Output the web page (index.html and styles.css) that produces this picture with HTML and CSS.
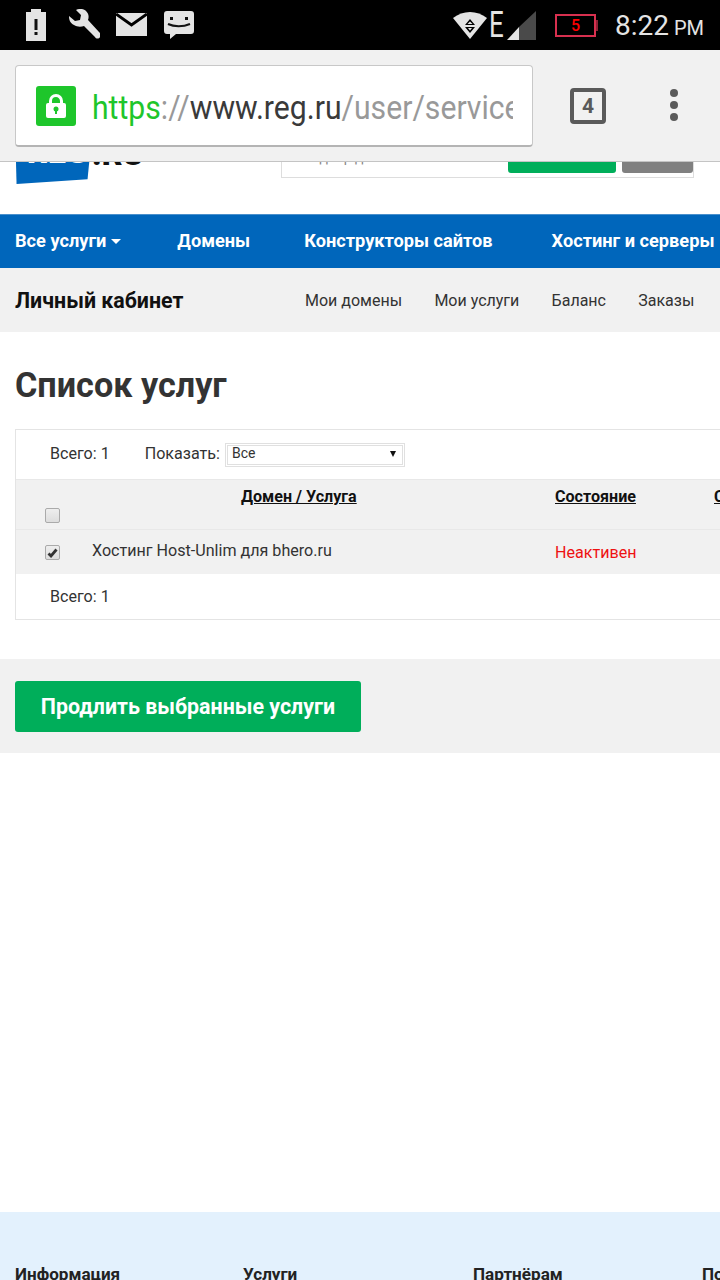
FILE: index.html
```html
<!DOCTYPE html>
<html lang="en">
<head>
  <meta charset="UTF-8" />
  <title>REG.RU – Список услуг</title>
  <link rel="stylesheet" href="styles.css">
</head>
<body>
  <div class="status-bar">
    <div class="status-left">
      <svg class="ic" width="20" height="32" viewBox="0 0 20 32"><path fill="#e4e4e4" d="M0 3h5V0h10v3h5v29H0z"/><path fill="#111" d="M8.500 10h3v11h-3zM8.500 23h3v3h-3z"/></svg>
      <svg class="ic wrench" width="32" height="32" viewBox="0 0 32 32"><path fill="#e4e4e4" d="M1 7 7 12l5-1 1-5-5-5c4-2 8-1 10 1 3 3 3 6 2 9l11 12c2 2 2 3 1 5s-4 2-5 0L16 17c-3 1-7 1-10-1-4-2-5-5-5-9z"/></svg>
      <svg class="ic" width="31" height="24" viewBox="0 0 31 24"><path fill="#e4e4e4" d="M0 0h31v23H0z"/><path fill="none" stroke="#000" stroke-width="3" d="M0 1l15.500 11L31 1"/></svg>
      <svg class="ic" width="30" height="28" viewBox="0 0 30 28"><path fill="#e4e4e4" d="M3 0h24q3 0 3 3v17q0 3-3 3H12l-6 5v-5H3q-3 0-3-3V3q0-3 3-3z"/><path fill="#111" d="M6 6h3v3H6zM21 6h3v3h-3z"/><path fill="none" stroke="#111" stroke-width="2" d="M4 13c6 3 15 3 22 0"/></svg>
    </div>
    <div class="status-right">
      <svg class="ic" width="34" height="28" viewBox="0 0 34 28"><path fill="#e4e4e4" d="M0 7C5 3 11 1 17 1s12 2 17 6L17 28z"/><path fill="#000" d="M17 8l5 6H12zM12 16h10l-5 6z"/><path fill="#e4e4e4" d="M17 10.500l2.500 2.500h-5zM15 17h4l-2 2.500z"/></svg>
      <span class="net">E</span>
      <svg class="ic" width="29" height="29" viewBox="0 0 29 29"><path fill="#4a4a4a" d="M29 0v29H12V16z"/><path fill="#e4e4e4" d="M12 16v13H0z"/></svg>
      <div class="battery"><span>5</span></div>
      <div class="clock">8:22 <small>PM</small></div>
    </div>
  </div>

  <div class="toolbar">
    <div class="url-box">
      <span class="lock">
        <svg width="20" height="24" viewBox="0 0 20 24"><path fill="none" stroke="#fff" stroke-width="3" d="M4.500 10V7a5.500 5.500 0 0 1 11 0v3"/><rect x="0" y="9" width="20" height="15" rx="2" fill="#fff"/><circle cx="10" cy="15" r="2.500" fill="#1ec62b"/><path fill="#1ec62b" d="M9 15h2v5H9z"/></svg>
      </span>
      <div class="url"><span class="url-text"><span class="g">https</span><span class="m">://</span><span class="d">www.reg.ru</span><span class="m">/user/service</span></span></div>
    </div>
    <div class="tabs">4</div>
    <div class="menu-dots"><i></i><i></i><i></i></div>
  </div>

  <header class="site-head">
    <div class="logo"><div class="logo-flag">REG</div><span class="logo-ru">.RU</span></div>
    <div class="search">
      <span class="search-text">Подбор домена</span>
      <span class="btn-find">Подобрать</span>
      <span class="btn-more">Ещё</span>
    </div>
  </header>

  <nav class="main-nav">
    <a class="all">Все услуги<i class="caret"></i></a>
    <a>Домены</a>
    <a>Конструкторы сайтов</a>
    <a>Хостинг и серверы</a>
  </nav>

  <div class="sub-nav">
    <strong>Личный кабинет</strong>
    <div class="sub-links">
      <a>Мои домены</a>
      <a>Мои услуги</a>
      <a>Баланс</a>
      <a>Заказы</a>
    </div>
  </div>

  <main>
    <h1>Список услуг</h1>
    <div class="panel">
      <div class="row top">
        <span class="total">Всего: 1</span>
        <span class="show">Показать:</span>
        <span class="fake-select">Все<i></i></span>
      </div>
      <div class="row head">
        <span class="box"></span>
        <a class="col-name">Домен / Услуга</a>
        <a class="col-state">Состояние</a>
        <a class="col-more">Срок</a>
      </div>
      <div class="row item">
        <span class="box checked">
          <svg width="11" height="10" viewBox="0 0 11 10"><path fill="none" stroke="#333" stroke-width="2.800" d="M1.500 5.500 4 8 9.500 1.500"/></svg>
        </span>
        <span class="item-name">Хостинг Host-Unlim для bhero.ru</span>
        <span class="col-state off">Неактивен</span>
      </div>
      <div class="row bottom"><span class="total">Всего: 1</span></div>
    </div>
    <div class="action-bar">
      <button class="renew">Продлить выбранные услуги</button>
    </div>
  </main>

  <footer>
    <b>Информация</b>
    <b>Услуги</b>
    <b>Партнёрам</b>
    <b>Поддержка</b>
  </footer>
</body>
</html>
```

FILE: styles.css
```css
html, body {
  margin: 0;
  height: 1280px;
  overflow: hidden;
}
body {
  width: 720px;
  font-family: Roboto, 'Liberation Sans', sans-serif;
  background: #fff;
  color: #333;
}
a {
  color: inherit;
}
.status-bar {
  height: 50px;
  background: #000;
  display: flex;
  justify-content: space-between;
  align-items: center;
}
.status-left {
  display: flex;
  align-items: center;
  gap: 17px;
  padding-left: 26px;
}
.status-left .wrench {
  margin: 0 -1px 0 5px;
}
.status-right {
  display: flex;
  align-items: center;
  padding-right: 16px;
}
.ic {
  display: block;
  flex: none;
}
.net {
  color: #e4e4e4;
  font-size: 36px;
  line-height: 30px;
  width: 14px;
  margin: 0 4px 0 2px;
  transform: scaleX(.72);
  transform-origin: left center;
}
.battery {
  width: 41px;
  height: 23px;
  box-sizing: border-box;
  border: 2px solid #d8304f;
  margin: 0 19px 0 19px;
  display: flex;
  justify-content: center;
  align-items: center;
  position: relative;
  color: #f00;
  font-size: 16px;
  font-weight: 500;
}
.battery::after {
  content: '';
  position: absolute;
  right: -4px;
  top: 4px;
  width: 2px;
  height: 11px;
  background: #8c2236;
}
.clock {
  color: #e4e4e4;
  font-size: 28px;
  white-space: nowrap;
}
.clock small {
  font-size: 20px;
  margin-left: -2px;
}
.toolbar {
  height: 112px;
  background: #f1f1f1;
  border-bottom: 1px solid #c4c4c4;
  box-sizing: border-box;
  display: flex;
  align-items: flex-start;
  padding: 15px 0 0 15px;
  position: relative;
  z-index: 2;
}
.url-box {
  width: 518px;
  height: 82px;
  box-sizing: border-box;
  background: #fff;
  border: 1px solid #c8c8c8;
  border-bottom: 2px solid #b4b4b4;
  border-radius: 4px;
  display: flex;
  align-items: center;
  padding: 0 19px 0 20px;
  flex: none;
}
.lock {
  width: 40px;
  height: 40px;
  background: #1ec62b;
  border-radius: 3px;
  display: flex;
  justify-content: center;
  align-items: center;
  flex: none;
  margin-right: 16px;
}
.url {
  font-size: 34px;
  white-space: nowrap;
  overflow: hidden;
  flex: 1;
  padding-top: 2px;
}
.url-text {
  display: inline-block;
  transform: scaleX(.887);
  transform-origin: left center;
}
.url .g { color: #1ec62b; }
.url .m { color: #999; }
.url .d { color: #3a3a3a; }
.tabs {
  width: 36px;
  height: 36px;
  box-sizing: border-box;
  border: 4px solid #5a5a5a;
  border-radius: 4px;
  color: #5a5a5a;
  font-size: 21px;
  font-weight: 700;
  display: flex;
  justify-content: center;
  align-items: center;
  margin: 23px 0 0 37px;
}
.menu-dots {
  margin: 24px 0 0 64px;
  display: flex;
  flex-direction: column;
  gap: 4px;
}
.menu-dots i {
  display: block;
  width: 8px;
  height: 8px;
  background: #5a5a5a;
  border-radius: 50%;
}
.site-head {
  height: 52px;
  position: relative;
  overflow: hidden;
}
.logo {
  position: absolute;
  left: 15px;
  bottom: 30px;
  display: flex;
  align-items: flex-end;
}
.logo-flag {
  width: 78px;
  height: 60px;
  box-sizing: border-box;
  background: #0066bb;
  color: #fff;
  font-size: 32px;
  font-weight: 900;
  padding: 13px 0 0 12px;
  line-height: 30px;
  clip-path: polygon(0 0, 100% 0, 93% 92%, 2% 100%);
}
.logo-ru {
  color: #111;
  font-size: 32px;
  font-weight: 900;
  line-height: 30px;
  margin: 0 0 15px -1px;
}
.search {
  position: absolute;
  left: 281px;
  bottom: 36px;
  width: 413px;
  height: 40px;
  box-sizing: border-box;
  border: 1px solid #ddd;
  font-size: 14px;
  color: #888;
}
.search-text {
  position: absolute;
  left: 20px;
  bottom: 12px;
}
.btn-find, .btn-more {
  position: absolute;
  bottom: 4px;
  height: 30px;
  border-radius: 3px;
  color: #fff;
  text-align: center;
  font-weight: 700;
  line-height: 22px;
}
.btn-find {
  left: 226px;
  width: 108px;
  background: #00ae5a;
}
.btn-more {
  left: 340px;
  width: 71px;
  background: #808080;
}
.main-nav {
  height: 54px;
  box-sizing: border-box;
  padding: 0 0 2px 15px;
  background: #0066bb;
  box-shadow: inset 0 1px 0 #4a90cc;
  color: #fff;
  font-size: 18.200px;
  font-weight: 700;
  display: flex;
  align-items: center;
  white-space: nowrap;
}
.main-nav a { margin-right: 54px; }
.main-nav .all { margin-right: 56px; }
.main-nav a:nth-child(3) { margin-right: 59px; }
.caret {
  display: inline-block;
  border: 5.500px solid transparent;
  border-top-color: #fff;
  border-bottom: 0;
  margin-left: 5px;
  vertical-align: 3px;
}
.sub-nav {
  height: 64px;
  background: #f1f1f1;
  display: flex;
  align-items: center;
  padding-left: 15px;
}
.sub-nav strong {
  color: #111;
  font-size: 21.400px;
  width: 290px;
  flex: none;
}
.sub-links {
  display: flex;
  gap: 32.300px;
  font-size: 16px;
  white-space: nowrap;
}
main h1 {
  margin: 0;
  padding: 34px 0 0 15px;
  height: 63px;
  font-size: 34.200px;
  line-height: 38px;
  font-weight: 700;
}
.panel {
  margin-left: 15px;
  width: 720px;
  border: 1px solid #e4e4e4;
  box-sizing: border-box;
  font-size: 16.100px;
}
.row {
  position: relative;
  display: flex;
  align-items: center;
  box-sizing: border-box;
  white-space: nowrap;
}
.top {
  height: 50px;
  border-bottom: 1px solid #e8e8e8;
}
.total { margin-left: 34px; }
.top .total, .show {
  margin-bottom: 2px;
}
.show { margin-left: 35px; }
.fake-select {
  margin-left: 5px;
  width: 180px;
  height: 24px;
  box-sizing: border-box;
  border: 3px double #e0e0e0;
  background: #fff;
  font-size: 14px;
  line-height: 15px;
  padding-left: 4px;
  position: relative;
}
.fake-select i {
  position: absolute;
  right: 6px;
  top: 5px;
  border: 3.500px solid transparent;
  border-top: 6px solid #111;
  border-bottom: 0;
}
.head {
  height: 50px;
  background: #f1f1f1;
  border-bottom: 1px solid #e8e8e8;
  color: #111;
  font-weight: 700;
}
.head a {
  text-decoration: underline;
  position: absolute;
  top: 7px;
}
.col-name { left: 225px; }
.col-state {
  position: absolute;
  left: 539px;
}
.col-more { left: 698px; }
.box {
  position: absolute;
  left: 29px;
  width: 15px;
  height: 15px;
  box-sizing: border-box;
  border: 1px solid #aaa;
  border-radius: 2px;
  background: linear-gradient(#eee, #ddd);
  display: flex;
  justify-content: center;
  align-items: center;
}
.head .box { top: 28px; }
.item {
  height: 44px;
  background: #f1f1f1;
}
.item .box { top: 15px; }
.item-name {
  margin-left: 76px;
  margin-bottom: 4px;
}
.off { color: #ee1111; }
.bottom { height: 45px; }
.action-bar {
  margin-top: 39px;
  height: 94px;
  background: #f1f1f1;
  padding: 22px 0 0 15px;
  box-sizing: border-box;
}
.renew {
  width: 346px;
  height: 51px;
  background: #00ae5a;
  color: #fff;
  border: none;
  border-radius: 3px;
  font-family: inherit;
  font-size: 21.400px;
  font-weight: 700;
}
footer {
  margin-top: 459px;
  height: 120px;
  background: #e3f1fd;
  color: #222;
  font-size: 17.100px;
  display: grid;
  grid-template-columns: 228px 230px 229px 100px;
  padding: 52px 0 0 15px;
  white-space: nowrap;
}
```
